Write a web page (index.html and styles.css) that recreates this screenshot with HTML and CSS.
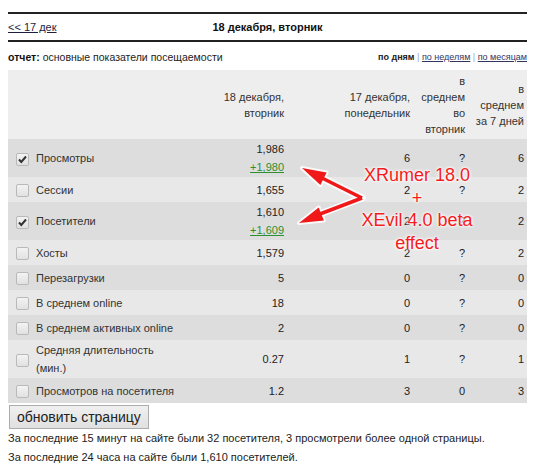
FILE: index.html
```html
<!DOCTYPE html>
<html>
<head>
<meta charset="utf-8">
<link rel="stylesheet" href="styles.css">
</head>
<body>
<div class="page">
  <div class="daybar">
    <a class="prev" href="#">&lt;&lt; 17 дек</a>
    <div class="daytitle">18 декабря, вторник</div>
    <div></div>
  </div>
  <div class="reportbar">
    <div class="report"><b>отчет:</b> основные показатели посещаемости</div>
    <div class="periods"><b>по дням</b> <span class="sep">|</span> <a href="#">по неделям</a> <span class="sep">|</span> <a href="#">по месяцам</a></div>
  </div>
  <table class="stats">
    <colgroup>
      <col class="c-cb"><col class="c-label"><col class="c-today"><col class="c-prev"><col class="c-avgday"><col class="c-avg7">
    </colgroup>
    <thead>
      <tr>
        <th></th>
        <th></th>
        <th>18 декабря,<br>вторник</th>
        <th>17 декабря,<br>понедельник</th>
        <th>в<br>среднем<br>во<br>вторник</th>
        <th>в<br>среднем<br>за 7 дней</th>
      </tr>
    </thead>
    <tbody>
      <tr class="dark">
        <td><span class="cb checked"><svg viewBox="0 0 13 13"><path d="M3 6.5 L5.3 9 L10 3.5" /></svg></span></td>
        <td>Просмотры</td>
        <td><div>1,986</div><div><a class="delta" href="#">+1,980</a></div></td>
        <td>6</td><td>?</td><td>6</td>
      </tr>
      <tr class="light">
        <td><span class="cb"></span></td>
        <td>Сессии</td>
        <td>1,655</td>
        <td>2</td><td>?</td><td>2</td>
      </tr>
      <tr class="dark">
        <td><span class="cb checked"><svg viewBox="0 0 13 13"><path d="M3 6.5 L5.3 9 L10 3.5" /></svg></span></td>
        <td>Посетители</td>
        <td><div>1,610</div><div><a class="delta" href="#">+1,609</a></div></td>
        <td>2</td><td>?</td><td>2</td>
      </tr>
      <tr class="light">
        <td><span class="cb"></span></td>
        <td>Хосты</td>
        <td>1,579</td>
        <td>2</td><td>?</td><td>2</td>
      </tr>
      <tr class="dark">
        <td><span class="cb"></span></td>
        <td>Перезагрузки</td>
        <td>5</td>
        <td>0</td><td>?</td><td>0</td>
      </tr>
      <tr class="light">
        <td><span class="cb"></span></td>
        <td>В среднем online</td>
        <td>18</td>
        <td>0</td><td>?</td><td>0</td>
      </tr>
      <tr class="dark">
        <td><span class="cb"></span></td>
        <td>В среднем активных online</td>
        <td>2</td>
        <td>0</td><td>?</td><td>0</td>
      </tr>
      <tr class="light">
        <td><span class="cb"></span></td>
        <td>Средняя длительность (мин.)</td>
        <td>0.27</td>
        <td>1</td><td>?</td><td>1</td>
      </tr>
      <tr class="dark">
        <td><span class="cb"></span></td>
        <td>Просмотров на посетителя</td>
        <td>1.2</td>
        <td>3</td><td>0</td><td>3</td>
      </tr>
    </tbody>
  </table>
  <button class="refresh" type="button">обновить страницу</button>
  <p class="note">За последние 15 минут на сайте были 32 посетителя, 3 просмотрели более одной страницы.</p>
  <p class="note">За последние 24 часа на сайте были 1,610 посетителей.</p>

  <svg class="arrows" width="535" height="470" viewBox="0 0 535 470">
    <g class="halo">
      <path d="M362 198 L322 178" />
      <path d="M362 198 L320 214" />
      <polygon points="302,168 326.6,172.4 320.4,185" />
      <polygon points="299,223 323.9,220.6 318.7,207.6" />
    </g>
    <g class="arrow">
      <path d="M362 198 L322 178" />
      <path d="M362 198 L320 214" />
      <polygon points="302,168 326.6,172.4 320.4,185" />
      <polygon points="299,223 323.9,220.6 318.7,207.6" />
    </g>
  </svg>
  <div class="stamp">XRumer 18.0<br>+<br>XEvil 4.0 beta<br>effect</div>
</div>
</body>
</html>
```

FILE: styles.css
```css
html, body {
  margin: 0;
  padding: 0;
  background: #ffffff;
}
body {
  padding: 8px;
  font-family: "Liberation Sans", Arial, sans-serif;
  font-size: 11px;
  color: #222222;
}
.page {
  width: 519px;
}
a {
  color: #33335f;
}

.daybar {
  margin-top: 4px;
  height: 26px;
  border-top: 2px solid #222222;
  border-bottom: 2px solid #222222;
  display: grid;
  grid-template-columns: 1fr auto 1fr;
  align-items: center;
}
.prev {
  color: #1f1f3f;
  font-size: 11px;
}
.daytitle {
  font-weight: bold;
  color: #111111;
}

.reportbar {
  display: flex;
  justify-content: space-between;
  align-items: center;
  height: 28px;
  padding-top: 2px;
  box-sizing: border-box;
}
.report {
  font-size: 10.5px;
}
.report b {
  color: #111111;
}
.periods {
  font-size: 9px;
  color: #333333;
}
.periods b {
  color: #222222;
}
.sep {
  color: #9aa7c6;
}

.stats {
  width: 519px;
  border-collapse: collapse;
  table-layout: fixed;
}
.c-cb { width: 25px; }
.c-label { width: 155px; }
.c-today { width: 99px; }
.c-prev { width: 126px; }
.c-avgday { width: 55px; }
.c-avg7 { width: 59px; }

.stats thead tr {
  background: #eeeeee;
}
.stats th {
  font-weight: normal;
  text-align: right;
  line-height: 16px;
  padding: 3px 3px 2px;
  vertical-align: middle;
  color: #333333;
}
.stats td {
  height: 25px;
  box-sizing: border-box;
  padding: 1px 3px;
  line-height: 18px;
  text-align: right;
  vertical-align: middle;
  color: #222222;
}
.stats td:nth-child(1) {
  text-align: left;
  padding-left: 8px;
  padding-right: 0;
}
.stats td:nth-child(2) {
  text-align: left;
  color: #333333;
}
.stats tr.dark { background: #dddddd; }
.stats tr.light { background: #e8e8e8; }

.delta {
  color: #2f8f2f;
}

.cb {
  display: inline-block;
  vertical-align: middle;
  width: 11px;
  height: 11px;
  border: 1px solid #b9b9b9;
  border-radius: 2px;
  background: linear-gradient(#f3f3f3, #e1e1e1);
  position: relative;
}
.cb svg {
  position: absolute;
  left: -1px;
  top: -1px;
  width: 13px;
  height: 13px;
}
.cb svg path {
  fill: none;
  stroke: #333333;
  stroke-width: 2;
}

.refresh {
  display: block;
  margin: 2px 0 0 1px;
  height: 24px;
  padding: 0 7px;
  font-family: "Liberation Sans", Arial, sans-serif;
  font-size: 14px;
  color: #222222;
  background: linear-gradient(#f0f0f0, #e0e0e0);
  border: 1px solid #acacac;
  border-radius: 0;
}
.note {
  margin: 0;
  line-height: 19px;
  color: #222222;
}

.arrows {
  position: absolute;
  left: 0;
  top: 0;
}
.halo path {
  stroke: #ffffff;
  stroke-width: 7;
  stroke-linecap: round;
  fill: none;
  opacity: 0.85;
}
.halo polygon {
  fill: #ffffff;
  stroke: #ffffff;
  stroke-width: 4;
  stroke-linejoin: round;
  opacity: 0.85;
}
.arrow path {
  stroke: #f01818;
  stroke-width: 3.5;
  fill: none;
}
.arrow polygon {
  fill: #f01818;
}
.stamp {
  position: absolute;
  left: 357px;
  top: 164px;
  width: 120px;
  text-align: center;
  font-size: 18px;
  line-height: 22.5px;
  color: #f41c1c;
  text-shadow: 0 0 2px #ffffff, 0 0 3px #ffffff, 0 0 4px #ffffff;
}
```
